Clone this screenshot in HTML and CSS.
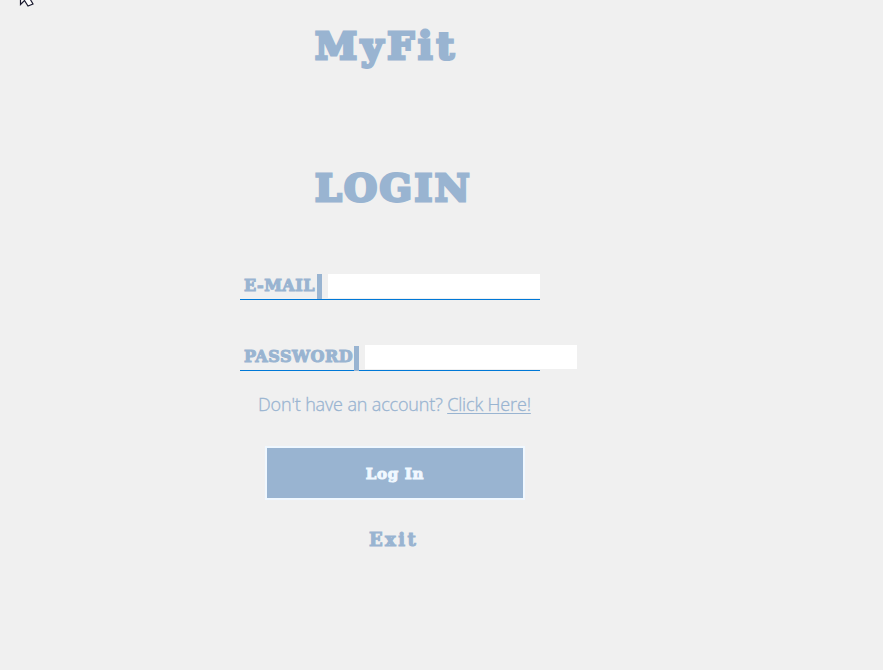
FILE: index.html
```html
<!DOCTYPE html>
<html lang="en">
<head>
<meta charset="utf-8">
<title>MyFit</title>
<link rel="stylesheet" href="styles.css">
</head>
<body>
<svg class="cursor" width="40" height="8" viewBox="0 0 40 8"><path d="M20.5-10V4.5L24.5 0.5L28 6L33 4L29.5-2" fill="#fff" stroke="#1b1b30" stroke-width="1.2"/></svg>
<main class="login">
  <h1 class="brand">MyFit</h1>
  <h2 class="title">LOGIN</h2>
  <form class="form">
    <div class="field">
      <label class="label email" for="email">E-MAIL</label>
      <input class="input" id="email" type="text">
    </div>
    <div class="field second">
      <label class="label password" for="password">PASSWORD</label>
      <input class="input" id="password" type="password">
    </div>
    <p class="signup">Don't have an account? <a href="#">Click Here!</a></p>
    <button class="submit" type="button"><span>Log In</span></button>
    <a class="exit">Exit</a>
  </form>
</main>
</body>
</html>
```
FILE: styles.css
```css
* { box-sizing: border-box; }
body {
  margin: 0;
  height: 670px;
  overflow: hidden;
  background: #f0f0f0;
  color: #99b4d1;
}
.cursor { position: absolute; left: 0; top: 0; }
.login {
  width: 300px;
  margin-left: 240px;
  padding-top: 22px;
}
.brand, .title, .label, .submit, .exit {
  font-family: "DejaVu Serif", serif;
  font-weight: bold;
  -webkit-text-stroke: 1px currentColor;
}
.brand, .title {
  margin: 0 0 0 75px;
  font-size: 38px;
  line-height: 48px;
  white-space: nowrap;
  -webkit-text-stroke-width: 3px;
}
.brand { letter-spacing: 4px; }
.title { margin-top: 94px; letter-spacing: 2.4px; }
.form {
  display: flex;
  flex-direction: column;
  margin-top: 62px;
}
.field {
  display: flex;
  height: 26px;
  border-bottom: 1px solid #0078d7;
}
.second { margin-top: 45px; }
.label {
  flex: none;
  height: 25px;
  margin-right: 6px;
  padding-left: 4px;
  border-right: 5px solid #99b4d1;
  font-size: 16px;
  line-height: 23px;
}
.email { width: 82px; letter-spacing: 0.5px; }
.password { width: 119px; height: 25px; margin-top: 1px; line-height: 21px; letter-spacing: 0.5px; }
.input {
  flex: none;
  width: 212px;
  height: 24px;
  padding: 0;
  border: 0;
  outline: 0;
  background: #fff;
}
.signup {
  margin: 20px 0 0 18px;
  font: 300 18px/26px "Open Sans", sans-serif;
  letter-spacing: -0.15px;
  -webkit-text-stroke: 0.3px currentColor;
  white-space: nowrap;
}
.signup a {
  color: inherit;
  text-decoration-thickness: 1px;
  text-underline-offset: 2px;
}
.submit {
  width: 260px;
  height: 54px;
  margin: 29px 0 0 25px;
  padding: 2px 0 0;
  border: 2px solid #f0f8ff;
  background: #99b4d1;
  color: #f0f8ff;
  font-size: 15px;
  letter-spacing: 0.7px;
}
.exit {
  margin: 29px 0 0 129px;
  font-size: 18px;
  line-height: 22px;
  letter-spacing: 2.4px;
}
```
